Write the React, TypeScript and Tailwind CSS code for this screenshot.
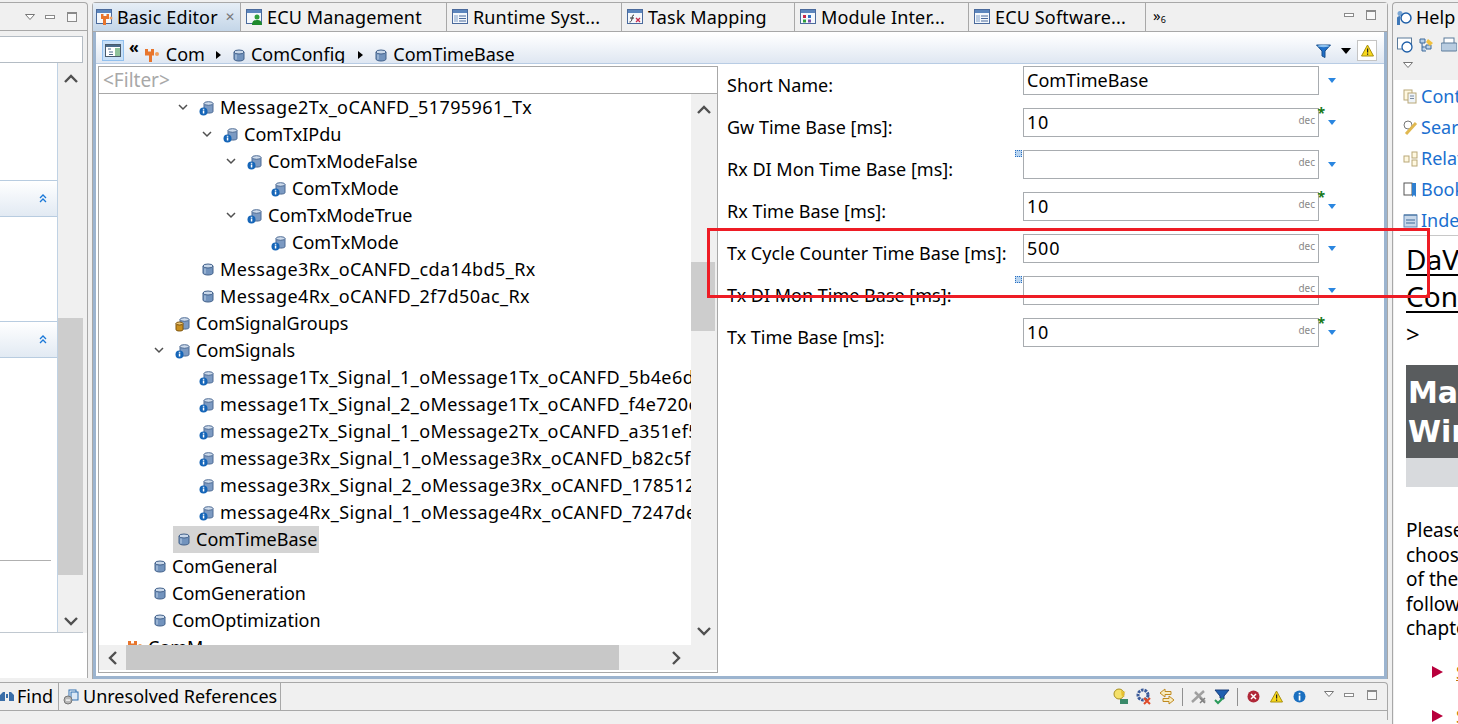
import type { ReactNode } from 'react';

const FONT = "font-['Noto_Sans',sans-serif]";

// tree rows, top to bottom. depth 0 is the ComM row that is cut off at the bottom
const TREE_ROWS: { label: string; depth: number; open?: boolean; icon: 'info' | 'db' | 'gold' | 'module'; selected?: boolean }[] = [
  { label: 'Message2Tx_oCANFD_51795961_Tx', depth: 3, open: true, icon: 'info' },
  { label: 'ComTxIPdu', depth: 4, open: true, icon: 'info' },
  { label: 'ComTxModeFalse', depth: 5, open: true, icon: 'info' },
  { label: 'ComTxMode', depth: 6, icon: 'info' },
  { label: 'ComTxModeTrue', depth: 5, open: true, icon: 'info' },
  { label: 'ComTxMode', depth: 6, icon: 'info' },
  { label: 'Message3Rx_oCANFD_cda14bd5_Rx', depth: 3, icon: 'db' },
  { label: 'Message4Rx_oCANFD_2f7d50ac_Rx', depth: 3, icon: 'db' },
  { label: 'ComSignalGroups', depth: 2, icon: 'gold' },
  { label: 'ComSignals', depth: 2, open: true, icon: 'info' },
  { label: 'message1Tx_Signal_1_oMessage1Tx_oCANFD_5b4e6d2a_Tx', depth: 3, icon: 'info' },
  { label: 'message1Tx_Signal_2_oMessage1Tx_oCANFD_f4e720e1_Tx', depth: 3, icon: 'info' },
  { label: 'message2Tx_Signal_1_oMessage2Tx_oCANFD_a351ef50_Tx', depth: 3, icon: 'info' },
  { label: 'message3Rx_Signal_1_oMessage3Rx_oCANFD_b82c5f0a_Rx', depth: 3, icon: 'info' },
  { label: 'message3Rx_Signal_2_oMessage3Rx_oCANFD_17851263_Rx', depth: 3, icon: 'info' },
  { label: 'message4Rx_Signal_1_oMessage4Rx_oCANFD_7247de10_Rx', depth: 3, icon: 'info' },
  { label: 'ComTimeBase', depth: 2, icon: 'db', selected: true },
  { label: 'ComGeneral', depth: 1, icon: 'db' },
  { label: 'ComGeneration', depth: 1, icon: 'db' },
  { label: 'ComOptimization', depth: 1, icon: 'db' },
  { label: 'ComM', depth: 0, icon: 'module' },
];

const FORM_ROWS: { label: string; value: string; dec?: boolean; star?: boolean; marker?: boolean }[] = [
  { label: 'Short Name:', value: 'ComTimeBase' },
  { label: 'Gw Time Base [ms]:', value: '10', dec: true, star: true },
  { label: 'Rx DI Mon Time Base [ms]:', value: '', dec: true, marker: true },
  { label: 'Rx Time Base [ms]:', value: '10', dec: true, star: true },
  { label: 'Tx Cycle Counter Time Base [ms]:', value: '500', dec: true },
  { label: 'Tx DI Mon Time Base [ms]:', value: '', dec: true, marker: true },
  { label: 'Tx Time Base [ms]:', value: '10', dec: true, star: true },
];

const TABS: { label: string; width: string; icon: ReactNode }[] = [
  { label: 'ECU Management', width: 'w-[206px]', icon: <EditorIcon variant="user" /> },
  { label: 'Runtime Syst...', width: 'w-[175px]', icon: <EditorIcon variant="list" /> },
  { label: 'Task Mapping', width: 'w-[173px]', icon: <EditorIcon variant="fx" /> },
  { label: 'Module Inter...', width: 'w-[174px]', icon: <EditorIcon variant="dots" /> },
  { label: 'ECU Software...', width: 'w-[177px]', icon: <EditorIcon variant="list" /> },
];

const HELP_LINKS: { label: string; color: string; kind: 'pages' | 'search' | 'related' | 'book' | 'index' }[] = [
  { label: 'Contents', color: '#b9a878', kind: 'pages' },
  { label: 'Search', color: '#b9a878', kind: 'search' },
  { label: 'Related Topics', color: '#b9a878', kind: 'related' },
  { label: 'Bookmarks', color: '#2f6fb0', kind: 'book' },
  { label: 'Index', color: '#5f88b8', kind: 'index' },
];

function DbIcon({ kind }: { kind: 'info' | 'db' | 'gold' }) {
  if (kind === 'db') {
    return (
      <svg width="12" height="13" viewBox="0 0 12 13" className="shrink-0">
        <path d="M1 3v7c0 1.2 2.2 2 5 2s5-.8 5-2V3z" fill="#7293bd" stroke="#41608a" />
        <ellipse cx="6" cy="3" rx="5" ry="2" fill="#c9d8ea" stroke="#41608a" />
        <path d="M3 5.500v5" stroke="#a9c0dc" strokeWidth="1.400" />
      </svg>
    );
  }
  const gold = kind === 'gold';
  return (
    <svg width="16" height="16" viewBox="0 0 16 16" className="shrink-0">
      <path d="M5 3.500v8c0 1 1.800 1.600 4.500 1.600s4.500-.6 4.500-1.600v-8z" fill="#7c9ac2" stroke="#4c6a94" />
      <ellipse cx="9.500" cy="3.500" rx="4.500" ry="1.800" fill="#cfdcec" stroke="#4c6a94" />
      {gold ? (
        <>
          <path d="M1 7.500v6c0 1 1.500 1.500 3.500 1.500s3.500-.5 3.500-1.500v-6z" fill="#c98f1e" stroke="#7c5410" />
          <ellipse cx="4.500" cy="7.500" rx="3.500" ry="1.500" fill="#eec877" stroke="#7c5410" />
        </>
      ) : (
        <>
          <circle cx="4.500" cy="11.500" r="4" fill="#1565b8" />
          <rect x="3.800" y="10.500" width="1.500" height="3" fill="#fff" />
          <rect x="3.800" y="8.800" width="1.500" height="1" fill="#fff" />
        </>
      )}
    </svg>
  );
}

function ModuleIcon() {
  return (
    <svg width="16" height="15" viewBox="0 0 16 15" className="shrink-0">
      <path d="M1 1h3v2.500h3V1h3v6.500H8V14H5V7.500H1z" fill="#e8752c" />
      <circle cx="13" cy="6" r="2" fill="#f0a060" />
    </svg>
  );
}

function EditorIcon({ variant }: { variant: 'basic' | 'user' | 'list' | 'fx' | 'dots' }) {
  return (
    <svg width="17" height="16" viewBox="0 0 17 16" className="shrink-0">
      <rect x="0.500" y="0.500" width="15" height="14" fill="#f4f8fc" stroke="#4a6a9c" />
      <rect x="1" y="1" width="14" height="3" fill="#5c86bd" />
      {variant === 'basic' && (
        <>
          <path d="M5 5h2.500v2h3V5H13v5h-3v6H7v-6H5z" fill="#e8752c" />
          <circle cx="15" cy="9" r="1.500" fill="#f0a060" />
        </>
      )}
      {variant === 'user' && (
        <>
          <circle cx="11" cy="8" r="2.500" fill="#2e9e3a" />
          <path d="M6 16c0-4 2-5 5-5s5 1 5 5z" fill="#1f8a2c" />
        </>
      )}
      {variant === 'list' && (
        <>
          <rect x="2" y="6" width="4" height="7" fill="#b9cbe2" />
          <path d="M7 7h7M7 9.500h7M7 12h7" stroke="#4a6a9c" />
        </>
      )}
      {variant === 'fx' && (
        <>
          <path d="M7 6c-2 0-1.500 2-2 4s-1 3-2.500 3M3 9h4" stroke="#333" fill="none" />
          <path d="M9 9l4 4M13 9l-4 4" stroke="#c8284a" strokeWidth="1.300" />
        </>
      )}
      {variant === 'dots' && (
        <>
          <rect x="3" y="6" width="3" height="3" fill="#c8284a" />
          <rect x="8" y="6" width="3" height="3" fill="#2e6fc0" />
          <rect x="3" y="10.500" width="3" height="3" fill="#2e9e3a" />
          <rect x="8" y="10.500" width="3" height="3" fill="#7a4fa8" />
        </>
      )}
    </svg>
  );
}

function ScrollChevron({ dir }: { dir: 'up' | 'down' | 'left' | 'right' }) {
  const paths = { up: 'M1 8l6-6 6 6', down: 'M1 2l6 6 6-6', left: 'M8 1L2 7l6 6', right: 'M2 1l6 6-6 6' };
  const horizontal = dir === 'left' || dir === 'right';
  return (
    <svg width={horizontal ? 10 : 14} height={horizontal ? 14 : 10} viewBox={horizontal ? '0 0 10 14' : '0 0 14 10'}>
      <path d={paths[dir]} fill="none" stroke="#505050" strokeWidth="2.400" />
    </svg>
  );
}

function TreeChevron() {
  return (
    <svg width="10" height="7" viewBox="0 0 10 7" className="shrink-0">
      <path d="M1 1l4 4 4-4" fill="none" stroke="#505050" strokeWidth="1.500" />
    </svg>
  );
}

function MinMax() {
  return (
    <>
      <div className="h-[4px] w-[10px] border border-[#8a8a8a] bg-white" />
      <div className="h-[10px] w-[10px] border border-[#8a8a8a] border-t-2 bg-[#f8f8f8]" />
    </>
  );
}

function MenuTriangle() {
  return (
    <svg width="10" height="6" viewBox="0 0 10 6">
      <path d="M.5.5h9L5 5.500z" fill="#fff" stroke="#777" />
    </svg>
  );
}

function DoubleUp() {
  return (
    <svg width="8" height="9" viewBox="0 0 8 9">
      <path d="M1 4l3-3 3 3M1 8l3-3 3 3" fill="none" stroke="#1a78d8" strokeWidth="1.300" />
    </svg>
  );
}

function SectionHeader() {
  return (
    <div className="flex h-[37px] shrink-0 items-center justify-end border-y border-[#b8cce0] bg-gradient-to-b from-white to-[#e2eaf3] pr-[10px]">
      <DoubleUp />
    </div>
  );
}

function LeftPanel() {
  return (
    <div className="flex h-[676px] w-[88px] shrink-0 flex-col rounded-tr-[4px] border-t border-r border-[#a8a8a8] bg-[#f0f0f0]">
      <div className="flex h-[28px] shrink-0 items-center justify-end gap-[12px] border-b border-[#a8a8a8] pr-[10px]">
        <div className="mr-[-2px]">
          <MenuTriangle />
        </div>
        <MinMax />
      </div>
      <div className="flex flex-1 flex-col bg-[#f0f0f0] pt-[5px] pr-[4px]">
        <div className="h-[27px] shrink-0 border border-l-0 border-[#b4bcc4] bg-white" />
        <div className="flex h-[570px] shrink-0 border-b border-[#c0c8d0] bg-white">
          <div className="flex w-[58px] shrink-0 flex-col border-r border-[#c0d2e4]">
            <div className="h-[117px] shrink-0" />
            <SectionHeader />
            <div className="h-[104px] shrink-0" />
            <SectionHeader />
            <div className="mr-[6px] h-[203px] shrink-0 border-b border-[#b0b0b0]" />
          </div>
          <div className="flex flex-1 flex-col items-center bg-[#f0f0f0]">
            <div className="flex h-[32px] items-center">
              <ScrollChevron dir="up" />
            </div>
            <div className="mt-[223px] h-[257px] w-full bg-[#cdcdcd]" />
            <div className="mt-[41px]">
              <ScrollChevron dir="down" />
            </div>
          </div>
        </div>
        <div className="mr-[-4px] flex-1 bg-white" />
      </div>
    </div>
  );
}

function TabStrip() {
  return (
    <div className="flex h-[29px] shrink-0 items-stretch border-b border-[#a8a8a8] bg-[#f0f0f0] text-[18px] tracking-[0.15px] text-black">
      <div className="flex w-[148px] items-center gap-[4px] border-r border-[#a8a8a8] bg-gradient-to-b from-[#e6eef6] to-[#c4d6e8] pl-[3px]">
        <EditorIcon variant="basic" />
        <span className="whitespace-nowrap">Basic Editor</span>
        <span className="ml-[3px] text-[12px] leading-none text-[#777]">✕</span>
      </div>
      {TABS.map((tab) => (
        <div key={tab.label} className={`flex items-center gap-[4px] border-r border-[#a8a8a8] pl-[5px] ${tab.width}`}>
          {tab.icon}
          <span className="whitespace-nowrap">{tab.label}</span>
        </div>
      ))}
      <div className="flex flex-1 items-start justify-between pt-[5px] pl-[7px] pr-[11px]">
        <div className="flex text-[15px] leading-none">
          <span>»</span>
          <span className="mt-[7px] text-[9px]">6</span>
        </div>
        <div className="flex items-center gap-[12px] pt-[2px]">
          <MinMax />
        </div>
      </div>
    </div>
  );
}

function Breadcrumb() {
  return (
    <div className="flex h-[30px] shrink-0 items-start overflow-hidden border-b border-[#b8cce4] bg-gradient-to-b from-white to-[#dfe7f2] pl-[6px] pr-[7px] text-[18px] leading-[24px] text-black">
      <div className="mt-[6px] flex h-[21px] w-[22px] shrink-0 items-center justify-center border border-[#92c0ee] bg-[#c8e0f8]">
        <svg width="16" height="13" viewBox="0 0 16 13">
          <rect x=".5" y=".5" width="15" height="12" fill="#fff" stroke="#4a5a6a" />
          <rect x="1" y="1" width="14" height="2" fill="#4a6a8a" />
          <rect x="10" y="4" width="5" height="8" fill="#8fc29a" />
          <path d="M3 5h3M4 8h4M4 10.500h4" stroke="#4a6a8a" />
        </svg>
      </div>
      <span className="ml-[5px] mt-[1px] text-[16px] font-bold leading-[24px]">«</span>
      <div className="ml-[5px] mt-[14px] w-[16px]">
        <ModuleIcon />
      </div>
      <span className="ml-[6px] mt-[8px]">Com</span>
      <span className="ml-[11px] mt-[17px] h-0 w-0 border-y-[4px] border-l-[5px] border-y-transparent border-l-black" />
      <div className="ml-[12px] mt-[15px]">
        <DbIcon kind="db" />
      </div>
      <span className="ml-[6px] mt-[8px]">ComConfig</span>
      <span className="ml-[13px] mt-[17px] h-0 w-0 border-y-[4px] border-l-[5px] border-y-transparent border-l-black" />
      <div className="ml-[12px] mt-[15px]">
        <DbIcon kind="db" />
      </div>
      <span className="ml-[6px] mt-[8px]">ComTimeBase</span>
      <div className="ml-auto flex items-center pt-[6px]">
        <svg width="15" height="14" viewBox="0 0 15 14">
          <path d="M.5 1h14L9 7v6.500L6 12V7z" fill="#1f6fc8" stroke="#1a4f8a" />
          <ellipse cx="7.500" cy="2" rx="6" ry="1.200" fill="#8cc0ee" />
        </svg>
        <span className="ml-[10px] h-0 w-0 border-x-[5px] border-t-[6px] border-x-transparent border-t-black" />
        <div className="ml-[6px] flex h-[21px] w-[20px] items-center justify-center border border-[#c4c4c4] bg-white">
          <WarningIcon />
        </div>
      </div>
    </div>
  );
}

function WarningIcon() {
  return (
    <svg width="13" height="13" viewBox="0 0 13 13">
      <path d="M6.500 1L12.500 12H.5z" fill="#f8d81c" stroke="#a89010" />
      <rect x="6" y="4.500" width="1.200" height="4" fill="#222" />
      <rect x="6" y="9.500" width="1.200" height="1.300" fill="#222" />
    </svg>
  );
}

function TreePane() {
  return (
    <div className="flex h-[607px] w-[620px] shrink-0 flex-col border border-[#a8a8a8] bg-white">
      <div className="h-[27px] shrink-0 border-b border-[#a8a8a8] pl-[4px] text-[19px] leading-[27px] text-[#a8a8a8]">&lt;Filter&gt;</div>
      <div className="flex h-[551px] shrink-0">
        <div className="w-[592px] shrink-0 overflow-hidden">
          {TREE_ROWS.map((row, i) => (
            <div key={i} className="flex h-[27px] items-center" style={{ paddingLeft: row.depth * 24 + 4 }}>
              <div className="flex w-[22px] shrink-0 items-center pl-[3px]">{row.open && <TreeChevron />}</div>
              <div className={`flex h-[27px] shrink-0 items-center pr-[2px] ${row.selected ? 'bg-[#d4d4d4]' : ''}`}>
                <div className={`flex w-[23px] shrink-0 items-center ${row.icon === 'db' ? 'pl-[5px]' : 'pl-[2px]'}`}>
                  {row.icon === 'module' ? <ModuleIcon /> : <DbIcon kind={row.icon} />}
                </div>
                <span className={`whitespace-nowrap text-[18px] text-black ${row.label.includes('_') ? 'tracking-[0.42px]' : ''}`}>{row.label}</span>
              </div>
            </div>
          ))}
        </div>
        <div className="flex flex-1 flex-col items-center bg-[#f0f0f0]">
          <div className="flex h-[32px] items-center">
            <ScrollChevron dir="up" />
          </div>
          <div className="mt-[136px] h-[69px] w-[24px] self-start bg-[#cdcdcd]" />
          <div className="mt-[285px] flex h-[29px] items-center">
            <ScrollChevron dir="down" />
          </div>
        </div>
      </div>
      <div className="flex h-[25px] shrink-0 items-center bg-[#f0f0f0]">
        <div className="flex w-[27px] shrink-0 items-center justify-center">
          <ScrollChevron dir="left" />
        </div>
        <div className="h-full w-[493px] bg-[#c8c8c8]" />
        <div className="flex flex-1 items-center justify-end pr-[36px]">
          <ScrollChevron dir="right" />
        </div>
      </div>
    </div>
  );
}

function FormPane() {
  return (
    <div className="flex flex-1 flex-col gap-[13px] pl-[9px] text-[18px] text-black">
      {FORM_ROWS.map((row) => (
        <div key={row.label} className="flex h-[29px] items-start">
          <span className="mt-[5px] w-[296px] shrink-0 whitespace-nowrap leading-[29px]">{row.label}</span>
          <div className={`relative flex h-[29px] w-[296px] shrink-0 items-center border border-[#a8acb0] bg-white pb-[2px] pl-[3px] leading-none ${row.dec ? 'tracking-[0.8px]' : ''}`}>
            {row.value}
            {row.dec && <span className="absolute right-[3px] top-[5px] text-[10px] leading-[12px] tracking-normal text-[#888]">dec</span>}
            {row.star && <span className="absolute right-[-8px] top-[-3px] text-[14px] font-bold leading-[14px] text-[#1a7a1a]">*</span>}
            {row.marker && <div className="absolute left-[-9px] top-[-1px] h-[7px] w-[7px] border border-dotted border-[#2a6fc0] bg-[#b8d4f0]" />}
          </div>
          <span className="ml-[9px] mt-[12px] h-0 w-0 border-x-[4px] border-t-[5px] border-x-transparent border-t-[#2a86e0]" />
        </div>
      ))}
    </div>
  );
}

function CenterPanel() {
  return (
    <div className="flex h-[677px] w-[1296px] shrink-0 flex-col rounded-t-[4px] border-x border-t border-[#a8a8a8] bg-[#f0f0f0]">
      <TabStrip />
      <div className="flex flex-1 flex-col border-x-[3px] border-b-[3px] border-[#9cb4cf] bg-white pt-[2px]">
        <Breadcrumb />
        <div className="flex flex-1 pl-[2px] pt-[2px]">
          <TreePane />
          <FormPane />
        </div>
      </div>
    </div>
  );
}

function BottomPanel() {
  const toolIcon = 'flex w-[23px] justify-center';
  return (
    <div className="flex h-[38px] flex-col overflow-hidden rounded-tr-[4px] border-t border-r border-[#a8a8a8] bg-[#f0f0f0] text-[18px] text-black">
      <div className="flex h-[28px] shrink-0 items-stretch border-b border-[#a8a8a8]">
        <div className="flex w-[59px] items-center gap-[3px] border-r border-[#a8a8a8]">
          <svg width="14" height="13" viewBox="0 0 14 13">
            <path d="M0 11V5l3-3h2v9zM14 11V5l-3-3H9v9zM6 4h2v4H6z" fill="#3a6ea8" />
          </svg>
          <span>Find</span>
        </div>
        <div className="flex w-[222px] items-center gap-[4px] border-r border-[#a8a8a8] pl-[4px]">
          <svg width="16" height="16" viewBox="0 0 16 16" className="shrink-0">
            <rect x="6" y="1" width="7" height="8" fill="#fff" stroke="#2f6fb0" />
            <rect x="8" y="3" width="7" height="8" fill="#dbe8f6" stroke="#2f6fb0" />
            <circle cx="5" cy="11" r="4" fill="#b8b8b8" stroke="#777" />
            <rect x="3" y="10.500" width="4" height="1.200" fill="#fff" />
          </svg>
          <span className="whitespace-nowrap">Unresolved References</span>
        </div>
        <div className="ml-auto flex items-center pr-[10px]">
          <div className={toolIcon}>
            <svg width="17" height="17" viewBox="0 0 17 17">
              <circle cx="7" cy="6" r="5" fill="#f4e06a" stroke="#a89020" />
              <path d="M9 1l1.500 3 3-.5-2 2.500 1 3-3-1.500z" fill="#e8c030" />
              <rect x="8" y="11" width="8" height="5" fill="#3a8a6a" />
            </svg>
          </div>
          <div className={toolIcon}>
            <svg width="17" height="17" viewBox="0 0 17 17">
              <circle cx="8" cy="7" r="5" fill="none" stroke="#3a5a9a" strokeWidth="3" strokeDasharray="2.500 1" />
              <path d="M9 10l6 6M15 10l-6 6" stroke="#e04a28" strokeWidth="2" />
            </svg>
          </div>
          <div className={toolIcon}>
            <svg width="16" height="17" viewBox="0 0 16 17">
              <path d="M1 5l5-4v2.500h6v3H6V9zM15 12l-5-4v2.500H4v3h6V16z" fill="#f8ecc0" stroke="#c08a20" />
            </svg>
          </div>
          <div className="mx-[4px] h-[18px] w-px bg-[#909090]" />
          <div className={toolIcon}>
            <svg width="16" height="16" viewBox="0 0 16 16">
              <path d="M1 13L13 2M4 3l10 10" stroke="#a0a0a0" strokeWidth="2.500" />
              <path d="M9 9l5 5M14 9l-5 5" stroke="#808080" strokeWidth="1.500" />
            </svg>
          </div>
          <div className={toolIcon}>
            <svg width="16" height="16" viewBox="0 0 16 16">
              <path d="M1 1h14L10 7v3L6 9V7z" fill="#1f5fb0" stroke="#1a3f7a" />
              <path d="M1 11l3 3 5-5" fill="none" stroke="#2a9a5a" strokeWidth="2" />
            </svg>
          </div>
          <div className="mx-[4px] h-[18px] w-px bg-[#909090]" />
          <div className={toolIcon}>
            <svg width="13" height="13" viewBox="0 0 13 13">
              <circle cx="6.500" cy="6.500" r="6" fill="#b02838" />
              <path d="M4 4l5 5M9 4l-5 5" stroke="#fff" strokeWidth="1.500" />
            </svg>
          </div>
          <div className={toolIcon}>
            <WarningIcon />
          </div>
          <div className={toolIcon}>
            <svg width="13" height="13" viewBox="0 0 13 13">
              <circle cx="6.500" cy="6.500" r="6" fill="#1a6fc0" />
              <rect x="5.700" y="5.500" width="1.700" height="5" fill="#fff" />
              <rect x="5.700" y="2.800" width="1.700" height="1.600" fill="#fff" />
            </svg>
          </div>
          <div className="ml-[13px] mr-[10px] mb-[6px]">
            <MenuTriangle />
          </div>
          <div className="mb-[4px] flex items-center gap-[13px]">
            <MinMax />
          </div>
        </div>
      </div>
      <div className="-ml-[6px] pt-[2px] text-[17px] leading-[26px]">91 categories</div>
    </div>
  );
}

function HelpIcon({ kind, color }: { kind: string; color: string }) {
  return (
    <svg width="15" height="16" viewBox="0 0 15 16" className="shrink-0">
      {kind === 'book' ? (
        <>
          <rect x="1" y="1" width="8" height="12" fill="#fff" stroke="#555" />
          <path d="M9 1h4v14l-2-2-2 2z" fill="#2f7fd0" />
        </>
      ) : kind === 'index' ? (
        <>
          <rect x="1" y="2" width="13" height="12" fill="#c8d8ea" stroke={color} />
          <path d="M1 2h13M3 7h9M3 10h9" stroke="#3f6a9a" />
        </>
      ) : kind === 'search' ? (
        <>
          <circle cx="5" cy="5" r="4" fill="#fff" stroke="#777" />
          <path d="M3 14L13 3" stroke="#e0b850" strokeWidth="3" />
        </>
      ) : kind === 'related' ? (
        <>
          <rect x="1" y="5" width="5" height="6" fill="#fff8e0" stroke={color} />
          <rect x="9" y="1" width="5" height="6" fill="#fff8e0" stroke={color} />
          <rect x="9" y="9" width="5" height="6" fill="#fff8e0" stroke={color} />
        </>
      ) : (
        <>
          <rect x="1" y="1" width="8" height="10" fill="#fff8e0" stroke={color} />
          <rect x="5" y="4" width="8" height="10" fill="#eef3f8" stroke={color} />
          <path d="M7 7h4M7 9.500h4" stroke="#7a8aa0" />
        </>
      )}
    </svg>
  );
}

function HelpPanel() {
  return (
    <div className="ml-[2px] flex h-[722px] flex-1 flex-col overflow-hidden rounded-tl-[4px] border-l border-t border-[#a8a8a8] bg-[#f0f0f0]">
      <div className="flex h-[29px] shrink-0 items-center gap-[4px] pl-[3px] text-[18px] text-black">
        <svg width="16" height="16" viewBox="0 0 16 16" className="shrink-0">
          <circle cx="4" cy="3.500" r="2.500" fill="#7aa6d4" />
          <path d="M1 15V8c0-1 1-2 3-2v9z" fill="#3f78b8" />
          <circle cx="10" cy="8" r="5" fill="#fff" stroke="#1f5fa8" strokeWidth="1.500" />
        </svg>
        <span>Help</span>
      </div>
      <div className="flex h-[25px] shrink-0 items-center gap-[6px] pl-[4px]">
        <svg width="16" height="16" viewBox="0 0 16 16" className="shrink-0">
          <rect x=".5" y="1" width="14" height="11" fill="#fff" stroke="#5a7a9a" />
          <circle cx="10" cy="10" r="5" fill="#fff" stroke="#1f5fa8" strokeWidth="1.300" />
        </svg>
        <svg width="16" height="16" viewBox="0 0 16 16" className="shrink-0">
          <path d="M1 2h5v4H1zM3 6v8h4M3 10h4M7 8h5v4H7z" fill="#b8d0ea" stroke="#3f6a9a" />
          <path d="M9 2l5 4-3 3-4-4z" fill="#f0c040" />
        </svg>
        <svg width="16" height="16" viewBox="0 0 16 16" className="shrink-0">
          <rect x="3" y="1" width="10" height="6" fill="#fff" stroke="#5a7a9a" />
          <rect x="0" y="6" width="16" height="8" rx="1" fill="#b8cce0" stroke="#5a7a9a" />
        </svg>
      </div>
      <div className="flex h-[23px] shrink-0 items-start pl-[10px] pt-[5px]">
        <MenuTriangle />
      </div>
      <div className="ml-[1px] flex-1 bg-white text-black">
        <div className="ml-[6px] h-[156px] border-b border-[#c8c8c8] pt-[1px]">
          {HELP_LINKS.map((link) => (
            <div key={link.label} className="-ml-[5px] flex h-[31px] items-center gap-[3px] whitespace-nowrap pl-[8px] text-[18px] text-[#1a6fd0]">
              <HelpIcon kind={link.kind} color={link.color} />
              {link.label}
            </div>
          ))}
        </div>
        <div className="pl-[12px] pt-[5px]">
          <div className="whitespace-nowrap text-[28px] leading-[37px] underline decoration-2 underline-offset-4">DaVinci</div>
          <div className="whitespace-nowrap text-[28px] leading-[37px] underline decoration-2 underline-offset-4">Configurator</div>
          <div className="text-[24px] leading-[37px]">&gt;</div>
          <div className="mt-[13px] h-[93px] bg-[#595c5e] pl-[2px] pt-[8px] font-['DejaVu_Sans',sans-serif] text-[30px] font-bold leading-[39px] text-white">
            <div>Main</div>
            <div>Window</div>
          </div>
          <div className="h-[29px] bg-[#d8dadd]" />
          <div className="mt-[31px] whitespace-nowrap text-[19px] leading-[24.500px]">
            <div>Please</div>
            <div>choose</div>
            <div>of the</div>
            <div>following</div>
            <div>chapters</div>
          </div>
          <div className="mt-[19px] flex items-center gap-[13px] pl-[26px]">
            <span className="h-0 w-0 border-y-[6px] border-l-[11px] border-y-transparent border-l-[#b8003c]" />
            <span className="text-[18px] leading-[24px] text-[#c07a10] underline">Start</span>
          </div>
          <div className="mt-[20px] flex items-center gap-[13px] pl-[26px]">
            <span className="h-0 w-0 border-y-[6px] border-l-[11px] border-y-transparent border-l-[#b8003c]" />
            <span className="text-[18px] leading-[24px] text-[#c07a10] underline">Start</span>
          </div>
        </div>
      </div>
    </div>
  );
}

export default function App() {
  return (
    <div className={`relative flex h-[724px] w-[1458px] overflow-hidden bg-[#f0f0f0] ${FONT}`}>
      <div className="flex w-[1388px] shrink-0 flex-col pt-[2px]">
        <div className="flex h-[680px] shrink-0 items-start gap-[4px]">
          <LeftPanel />
          <CenterPanel />
        </div>
        <BottomPanel />
      </div>
      <div className="flex flex-1 flex-col pt-[2px] pl-[2px]">
        <HelpPanel />
      </div>
      {/* red annotation drawn over the screenshot */}
      <div className="absolute left-[707px] top-[228px] h-[70px] w-[723px] border-[3px] border-[#ee1c25]" />
    </div>
  );
}
